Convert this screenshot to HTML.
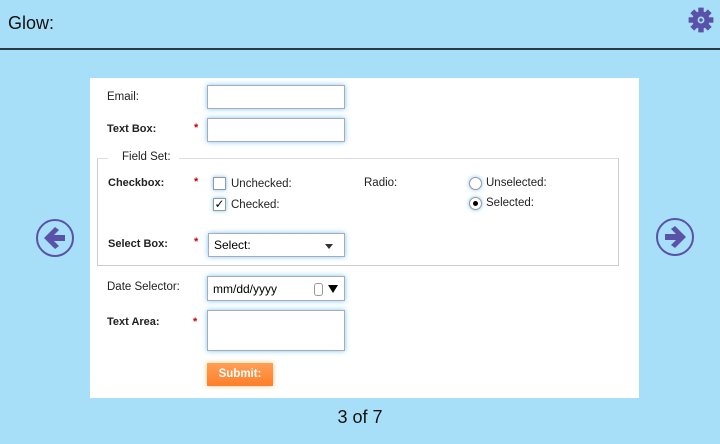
<!DOCTYPE html>
<html><head><style>
body{margin:0;width:720px;height:444px;background:#a8dff8;position:relative;overflow:hidden;font-family:"Liberation Sans",sans-serif;font-size:12px;color:#222}
.a{position:absolute}
.hdr{left:0;top:0;width:720px;height:48px;border-bottom:2px solid #2a3a40}
.panel{left:90px;top:78px;width:549px;height:320px;background:#fff}
.in{position:absolute;background:#fff;border:1px solid #aab;box-shadow:0 0 5px #7cc6f2;box-sizing:border-box}
.lbl{position:absolute;font-size:11.5px}
b.lbl{font-weight:bold}
.st{position:absolute;color:#c00;font-size:11px;font-weight:bold}
.cb{position:absolute;width:13px;height:13px;border:1px solid #999;box-shadow:0 0 4px #7cc6f2;background:#fff;box-sizing:border-box}
.rd{position:absolute;width:13px;height:13px;border:1px solid #999;border-radius:50%;box-shadow:0 0 4px #7cc6f2;background:#fff;box-sizing:border-box}
</style></head><body>
<div class="a hdr"></div>
<div class="a" style="left:8px;top:13px;font-size:18px;color:#111">Glow:</div>
<svg class="a" style="left:687px;top:6px" width="28" height="28" viewBox="0 0 26 26"><g fill="#5a52a8"><circle cx="13" cy="13" r="8"/><g><rect x="10.5" y="1.5" width="5" height="5"/><rect x="10.5" y="19.5" width="5" height="5"/><rect x="1.5" y="10.5" width="5" height="5"/><rect x="19.5" y="10.5" width="5" height="5"/><rect x="10.5" y="1.5" width="5" height="5" transform="rotate(45 13 13)"/><rect x="10.5" y="19.5" width="5" height="5" transform="rotate(45 13 13)"/><rect x="1.5" y="10.5" width="5" height="5" transform="rotate(45 13 13)"/><rect x="19.5" y="10.5" width="5" height="5" transform="rotate(45 13 13)"/></g></g><circle cx="13" cy="13" r="3.2" fill="#a8dff8" stroke="none"/><circle cx="13" cy="13" r="1.6" fill="#5a52a8"/></svg>
<svg class="a" style="left:35px;top:218px" width="40" height="40" viewBox="0 0 40 40"><circle cx="20" cy="20" r="18" fill="none" stroke="#5a52a8" stroke-width="2"/><path d="M30 17H19l5-5-4-3-11 11 11 11 4-3-5-5h11z" fill="#5a52a8"/></svg>
<svg class="a" style="left:655px;top:217px" width="40" height="40" viewBox="0 0 40 40"><circle cx="20" cy="20" r="18" fill="none" stroke="#5a52a8" stroke-width="2"/><path d="M10 17h11l-5-5 4-3 11 11-11 11-4-3 5-5H10z" fill="#5a52a8"/></svg>
<div class="a panel"></div>
<div class="lbl" style="left:107px;top:91px">Email:</div>
<div class="in" style="left:207px;top:85px;width:138px;height:24px"></div>
<b class="lbl" style="left:107px;top:123px;font-size:11px">Text Box:</b>
<span class="st" style="left:194px;top:122px">*</span>
<div class="in" style="left:207px;top:118px;width:138px;height:24px"></div>
<div class="a" style="left:97px;top:158px;width:520px;height:106px;border:1px solid #ccc;border-top-color:#ddd"></div>
<div class="lbl" style="left:108px;top:151px;background:#fff;padding:0 8px 0 14px">Field Set:</div>
<b class="lbl" style="left:108px;top:177px;font-size:11px">Checkbox:</b>
<span class="st" style="left:194px;top:176px">*</span>
<div class="cb" style="left:213px;top:177px"></div>
<div class="lbl" style="left:231px;top:178px">Unchecked:</div>
<div class="cb" style="left:213px;top:198px;font-size:12px;line-height:11px;text-align:center;color:#000">✓</div>
<div class="lbl" style="left:231px;top:199px">Checked:</div>
<div class="lbl" style="left:364px;top:177px">Radio:</div>
<div class="rd" style="left:469px;top:177px"></div>
<div class="lbl" style="left:486px;top:177px">Unselected:</div>
<div class="rd" style="left:469px;top:197px"><div style="position:absolute;left:3px;top:3px;width:5px;height:5px;border-radius:50%;background:#000"></div></div>
<div class="lbl" style="left:486px;top:197px">Selected:</div>
<b class="lbl" style="left:108px;top:238px;font-size:11px">Select Box:</b>
<span class="st" style="left:194px;top:236px">*</span>
<div class="in" style="left:208px;top:233px;width:137px;height:24px"><span style="position:absolute;left:5px;top:4px;color:#000">Select:</span><span style="position:absolute;right:11px;top:10px;border:4px solid transparent;border-top:5px solid #333"></span></div>
<div class="lbl" style="left:107px;top:281px">Date Selector:</div>
<div class="in" style="left:207px;top:276px;width:138px;height:25px"><span style="position:absolute;left:5px;top:5px;color:#000;font-size:12px">mm/dd/yyyy</span><span style="position:absolute;left:106px;top:6px;width:7px;height:11px;border:1px solid #999;border-radius:3px"></span><span style="position:absolute;left:120px;top:8px;border:5px solid transparent;border-top:8px solid #000;border-bottom:0"></span></div>
<b class="lbl" style="left:107px;top:316px;font-size:11px">Text Area:</b>
<span class="st" style="left:193px;top:316px">*</span>
<div class="in" style="left:207px;top:310px;width:138px;height:41px"></div>
<div class="a" style="left:207px;top:363px;width:66px;height:23px;background:linear-gradient(#ff9f55,#ff7f2a);box-shadow:0 0 5px #ffc880;color:#fff;font-weight:bold;font-size:11.5px;text-align:center;line-height:23px">Submit:</div>
<div class="a" style="left:0;width:720px;top:407px;text-align:center;font-size:18px;color:#111">3 of 7</div>
</body></html>
